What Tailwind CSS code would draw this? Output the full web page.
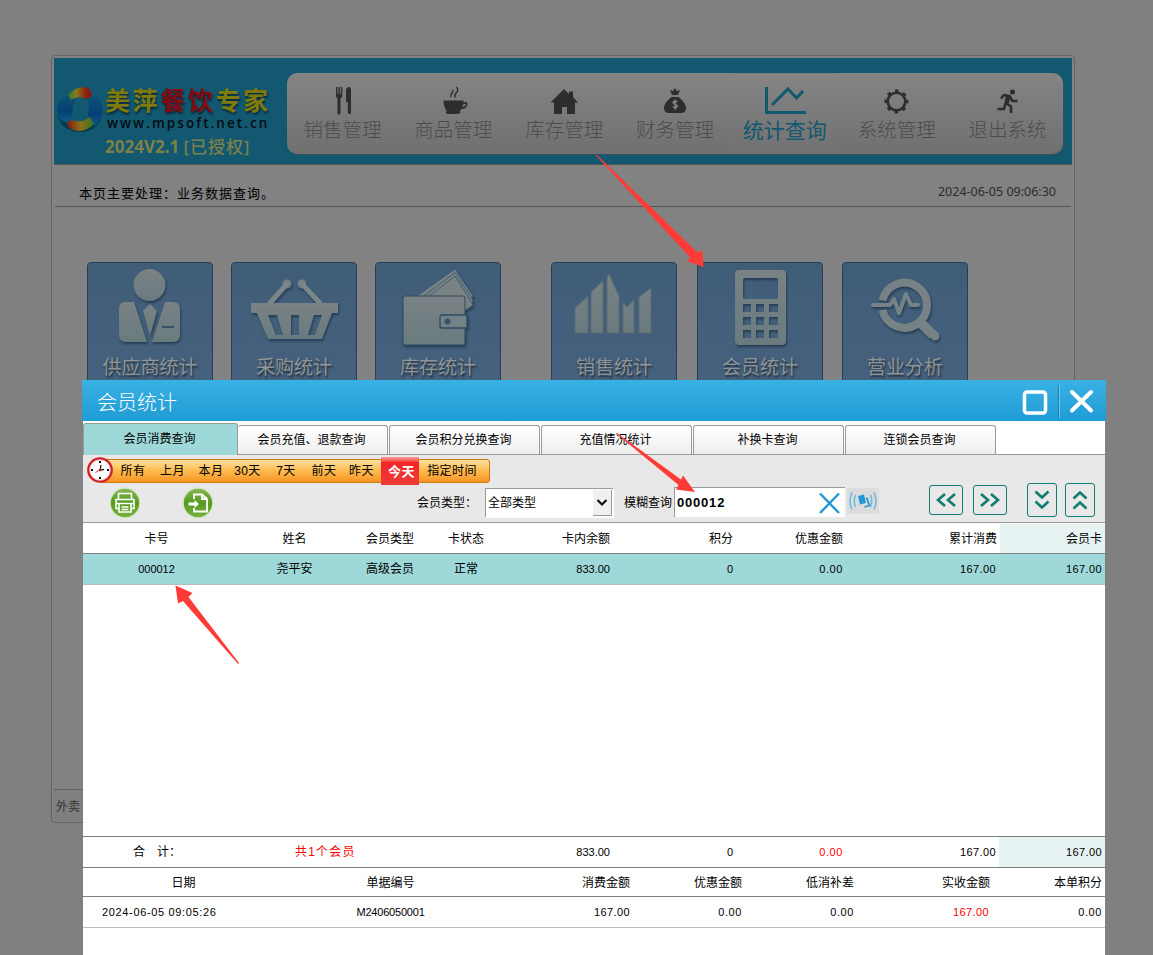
<!DOCTYPE html>
<html lang="zh-CN">
<head>
  <meta charset="UTF-8" />
  <meta name="viewport" content="width=device-width, initial-scale=1.0" />
  <title>会员统计</title>
  <script src="https://cdn.jsdelivr.net/npm/@tailwindcss/browser@4"></script>
  <style>
    body { font-family: 'Liberation Sans', 'Noto Sans CJK SC', sans-serif; }
    .tile-icon { filter: drop-shadow(1px 2px 1px rgba(20, 40, 60, .6)); }
    .tile-text { text-shadow: 1px 2px 2px #1d2f3f; }
  </style>
</head>
<body class="bg-[#808080] text-black">
<div class="relative w-[1153px] h-[955px] overflow-hidden">

  <!-- main window, dimmed -->
  <div class="absolute left-[51px] top-[55px] w-[1024px] h-[768px] border border-[#656565] rounded-[4px] bg-[#828282] px-[2px] pt-[2px] flex flex-col">
    <header class="h-[107px] shrink-0 bg-[#115870] border-b border-[#555] flex">
      <div class="w-[233px] shrink-0 relative flex pt-[27px]">
        <svg class="ml-[3px] w-[46px] h-[48px] shrink-0" viewBox="0 0 46 48">
          <defs>
            <linearGradient id="lgWarm" x1="0" x2="1"><stop offset="0" stop-color="#2f7a3a"/><stop offset=".35" stop-color="#8a7a18"/><stop offset=".75" stop-color="#8a2010"/><stop offset="1" stop-color="#7d1d10"/></linearGradient>
            <linearGradient id="lgWarm2" x1="0" x2="1"><stop offset="0" stop-color="#851a10"/><stop offset=".5" stop-color="#8a7218"/><stop offset="1" stop-color="#2f7428"/></linearGradient>
            <linearGradient id="lgBlue" x1="0" y1="0" x2="0" y2="1"><stop offset="0" stop-color="#0a5577"/><stop offset=".6" stop-color="#063f74"/><stop offset="1" stop-color="#0a5a88"/></linearGradient>
          </defs>
          <path d="M1 27Q1 47 26 47Q45 45 45 24Q44 38 28 42Q8 44 1 27Z" fill="#0b3a4c"/>
          <path d="M13 9Q0 15 0 24Q1 34 6 36Q14 36 16 28Q14 20 20 12.500Z" fill="url(#lgBlue)"/>
          <path d="M29 13Q33 11 39 10.500Q46 15 45.500 26Q44 36 38 41Q31 37 31 30Q34 20 29 13Z" fill="url(#lgBlue)"/>
          <path d="M11 10Q18 2 27 2Q34 3 35 9Q34 13 30 14Q20 10 14 15Z" fill="url(#lgWarm)"/>
          <path d="M37 39Q30 46 22 46Q12 45 10.500 39Q11 35 16 35.500Q26 38 33 32Z" fill="url(#lgWarm2)"/>
        </svg>
        <div class="whitespace-nowrap">
          <div class="h-[29px] leading-[32px] ml-[2px] text-[25px] font-bold tracking-[2.6px] text-[#807a0c] [text-shadow:1px_2px_2px_#062a3a]">美萍<span class="text-[#820b12]">餐饮</span>专家</div>
          <div class="h-[16px] leading-[18px] ml-[4px] text-[13.5px] tracking-[2.05px] font-[Open_Sans] font-semibold text-[#050d10]">www.mpsoft.net.cn</div>
          <div class="h-[26px] leading-[34px] ml-[2px] text-[17px] font-bold text-[#7f8048] font-[Noto_Sans,Noto_Sans_CJK_SC]">2024V2.1 <span class="font-medium tracking-[.9px]">[已授权]</span></div>
        </div>
      </div>
      <nav class="w-[776px] h-[81px] mt-[15px] rounded-[10px] bg-gradient-to-b from-[#848484] to-[#707070] grid grid-cols-7 text-center text-[19.5px] text-[#4c4c4c] font-light font-[Noto_Sans_CJK_SC] shadow-[1px_1px_2px_#31535f]">
        <div>
          <svg class="mx-auto mt-[13px] w-[30px] h-[30px]" viewBox="0 0 30 30" fill="#2d2d2d"><path d="M9 1h1.400v7h1V1h1.500v7h1V1h1.400v8.500q0 2-1.800 3V27a1.400 1.400 0 0 1-3 0V12.500Q9 11.500 9 9.500ZM24 3v23.500a1.600 1.600 0 0 1-3.200 0V16H19V5q0-4 3-4 2 0 2 2Z"/></svg>
          <div class="leading-[26px]">销售管理</div>
        </div>
        <div>
          <svg class="mx-auto mt-[13px] w-[30px] h-[30px]" viewBox="0 0 30 30" fill="#2d2d2d"><path d="M5.500 14.500h20v2q4-1.500 4 1.500c0 3-3 5-6 5q-1 1.500-2.500 2.500h1.500q0 2.500-4 2.500H11q-3.500 0-3.500-2.500h2Q5.500 22 5.500 14.500Zm19.500 4L24.500 21q3-1 3.300-2.500.2-1.500-2.800 0Z"/><path d="M13 11.500q-1-2 1-4.500t.5-3M17 11.500q-1-2.500 1.500-5T18.500 1" fill="none" stroke="#2d2d2d" stroke-width="1.400"/></svg>
          <div class="leading-[26px]">商品管理</div>
        </div>
        <div>
          <svg class="mx-auto mt-[13px] w-[30px] h-[30px]" viewBox="0 0 30 30" fill="#2d2d2d"><path d="M15 3l5 5V5.500h4V11l5 5.500h-3V28h-8v-7h-5v7H5V16.500H1.500Z"/></svg>
          <div class="leading-[26px]">库存管理</div>
        </div>
        <div>
          <svg class="mx-auto mt-[13px] w-[30px] h-[30px]" viewBox="0 0 30 30"><path d="M10 4l3 1 2-3 2 3 3-1-2 5h-6ZM11.500 11h7c4 3 7.500 7 7.500 11 0 3-2 5-5 5H9c-3 0-5-2-5-5 0-4 3.500-8 7.500-11Z" fill="#2d2d2d"/><path d="M17.500 16q-2.500-1.500-4.300 0c-1 2.500 4.300 2 4.300 4.500q-2 2-4.700.3M15.200 13.500V24" fill="none" stroke="#888" stroke-width="1.300"/></svg>
          <div class="leading-[26px]">财务管理</div>
        </div>
        <div class="bg-gradient-to-b from-[#858585] to-[#717171] rounded-t-[6px] mr-[2px] border-t border-[#7a7a7a] text-[#115870] text-[21px] font-normal">
          <svg class="mx-auto mt-[12px] w-[42px] h-[30px]" viewBox="0 0 42 30" fill="none" stroke="#115870" stroke-width="3"><path d="M2.500 1v25.500H43"/><path d="M8 19L24 3l8.500 9L39 5"/></svg>
          <div class="leading-[26px]">统计查询</div>
        </div>
        <div>
          <svg class="mx-auto mt-[13px] w-[30px] h-[30px]" viewBox="0 0 30 30" fill="none" stroke="#2d2d2d"><circle cx="14.500" cy="15.500" r="8.800" stroke-width="2.600"/><circle cx="14.500" cy="15.500" r="10.700" stroke-width="2.600" stroke-dasharray="3.600 4.803" stroke-dashoffset="1.800"/></svg>
          <div class="leading-[26px]">系统管理</div>
        </div>
        <div>
          <svg class="mx-auto mt-[13px] w-[30px] h-[30px]" viewBox="0 0 30 30"><circle cx="19.500" cy="6" r="2.500" fill="#2d2d2d"/><path d="M8 12.500l3-3.500 5.500 1-3.500 7 5 3.500V27M12.500 17.500L11 23H4.500M16.500 10l3 5h5" fill="none" stroke="#2d2d2d" stroke-width="2.600" stroke-linejoin="round"/><path d="M12.500 10.500l5-1.500-1.500 8-4.500 1Z" fill="#2d2d2d"/></svg>
          <div class="leading-[26px]">退出系统</div>
        </div>
      </nav>
    </header>

    <div class="h-[42px] shrink-0 mx-px border-b border-[#555] flex justify-between">
      <div class="pl-[24px] pt-[19px] text-[13px] leading-[20px] tracking-[1px]">本页主要处理：业务数据查询。</div>
      <div class="pr-[15px] pt-[17px] text-[12.5px] leading-[20px] text-[#2c2c2c] font-[Noto_Sans]">2024-06-05 09:06:30</div>
    </div>

    <div class="flex pl-[33px] pt-[55px] h-[582px] shrink-0 items-start text-[#909494] text-[19px] text-center font-[Noto_Sans_CJK_SC]">
      <svg width="0" height="0" class="absolute"><defs><linearGradient id="ic" x1="0" y1="0" x2="0" y2="1"><stop offset="0" stop-color="#7a8284"/><stop offset="1" stop-color="#697b7f"/></linearGradient></defs></svg>
      <div class="w-[126px] h-[126px] mr-[18px] border border-[#253f58] rounded-[4px] bg-gradient-to-b from-[#405d78] to-[#46617d]">
        <svg class="tile-icon w-[124px] h-[90px]" viewBox="0 0 124 90" fill="url(#ic)"><circle cx="61.500" cy="22" r="16"/><path d="M38 39h8l13 40H38q-7 0-7-7V46q0-7 7-7ZM77 39h7q8 0 8 7v26q0 7-7 7H64Z"/><path d="M62 41l7 7-7 25-7-25Z"/><path d="M74 64h12" stroke="#36536b" stroke-width="2"/></svg>
        <div class="tile-text leading-[26px]">供应商统计</div>
      </div>
      <div class="w-[126px] h-[126px] mr-[18px] border border-[#253f58] rounded-[4px] bg-gradient-to-b from-[#405d78] to-[#46617d]">
        <svg class="tile-icon w-[124px] h-[90px]" viewBox="0 0 124 90" fill="url(#ic)"><circle cx="55" cy="21" r="4.500"/><circle cx="70" cy="21" r="4.500"/><path d="M55 21L38 40M70 21L88 40" stroke="#79878b" stroke-width="5" stroke-linecap="round"/><path fill-rule="evenodd" d="M19 40h87v10h-6L90 76H36L25 50h-6ZM36 52l8 20h7l-6-20ZM59 52v20h8V52ZM82 52l-6 20h7l7-20Z"/></svg>
        <div class="tile-text leading-[26px]">采购统计</div>
      </div>
      <div class="w-[126px] h-[126px] mr-[50px] border border-[#253f58] rounded-[4px] bg-gradient-to-b from-[#405d78] to-[#46617d]">
        <svg class="tile-icon w-[124px] h-[90px]" viewBox="0 0 124 90"><g fill="#7a8284" stroke="#405d78" stroke-width="1"><path d="M41 33L79 6l18 27-7 9H60Z"/><path d="M45 35L79 9.500l18 28-4 8H60Z"/><path d="M49 36L79 13l18 29-7 5H60Z"/></g><rect x="27" y="33" width="62" height="49" rx="2" fill="url(#ic)" stroke="#2f4b63"/><path d="M91 52H66q-2 0-2 2v9q0 2 2 2h25Z" fill="#748286" stroke="#2f4b63" stroke-width="1.300"/><circle cx="71.500" cy="58.500" r="3" fill="#36536b"/></svg>
        <div class="tile-text leading-[26px]">库存统计</div>
      </div>
      <div class="w-[126px] h-[126px] mr-[20px] border border-[#253f58] rounded-[4px] bg-gradient-to-b from-[#405d78] to-[#46617d]">
        <svg class="w-[124px] h-[90px]" viewBox="0 0 124 90" fill="url(#ic)" stroke="#5c6c74" stroke-width="1"><path d="M23 70V45l13-12v37ZM39 70V29l12-11v52ZM55 70V15l2-4 10 22v37ZM71 70V40l4 4 7-7v33ZM87 70V34l12-9v45Z"/></svg>
        <div class="tile-text leading-[26px]">销售统计</div>
      </div>
      <div class="w-[126px] h-[126px] mr-[19px] border border-[#253f58] rounded-[4px] bg-gradient-to-b from-[#405d78] to-[#46617d]">
        <svg class="tile-icon w-[124px] h-[90px]" viewBox="0 0 124 90" fill="url(#ic)"><path fill-rule="evenodd" d="M41 7h43q4 0 4 4v67q0 4-4 4H41q-4 0-4-4V11q0-4 4-4ZM47 15q-2 0-2 2v17q0 2 2 2h31q2 0 2-2V17q0-2-2-2ZM45 41v8h8v-8ZM58 41v8h8v-8ZM71 41v8h9v-8ZM45 54v8h8v-8ZM58 54v8h8v-8ZM71 54v8h9v-8ZM45 67v8h8v-8ZM58 67v8h8v-8ZM71 67v8h9v-8Z"/></svg>
        <div class="tile-text leading-[26px]">会员统计</div>
      </div>
      <div class="w-[126px] h-[126px] border border-[#253f58] rounded-[4px] bg-gradient-to-b from-[#405d78] to-[#46617d]">
        <svg class="tile-icon w-[124px] h-[90px]" viewBox="0 0 124 90" fill="none" stroke="#768285"><path d="M39.500 37.500A22.500 22.500 0 1 1 39.500 47" stroke-width="8"/><path d="M77 59L90 72" stroke-width="10"/><path d="M91 72l1 1" stroke-width="9" stroke-linecap="round"/><path d="M30 42h17l4-6 5 14 7-19 5 11h7" stroke-width="4" stroke-linecap="round" stroke-linejoin="round"/></svg>
        <div class="tile-text leading-[26px]">营业分析</div>
      </div>
    </div>
    <div class="flex-1 border-t border-[#656565] pl-[2px] pt-[7px] text-[12px] leading-[20px] text-[#333] bg-[#7f7f7f]">外卖</div>
  </div>

  <!-- member statistics dialog -->
  <div class="absolute left-[82px] top-[380px] w-[1024px] h-[575px] flex flex-col text-[12px]">
    <div class="h-[41px] shrink-0 bg-gradient-to-b from-[#38b1e4] to-[#1e9cd5] flex items-center text-white">
      <div class="flex-1 pl-[15px] pt-[2px] text-[20px] font-light font-[Noto_Sans_CJK_SC]">会员统计</div>
      <svg class="w-[84px] h-[41px]" viewBox="0 0 84 41" fill="none"><rect x="2.500" y="12" width="21" height="21" rx="2.500" stroke="#fff" stroke-width="3.500"/><path d="M36.500 5v33" stroke="#1680b6"/><path d="M37.500 5v33" stroke="#72c9ee"/><path d="M50 12l19 18.500M69 12l-19 18.500" stroke="#fff" stroke-width="4" stroke-linecap="round"/></svg>
    </div>

    <div class="mx-px flex-1 min-h-0 bg-white flex flex-col">
      <div class="h-[34px] shrink-0 border-b border-[#999] flex items-end">
        <div class="w-[155px] h-[32px] mb-[-1px] bg-[#9ed8d8] border-t border-x border-[#999] rounded-t-[3px] text-center leading-[30px] pr-[2px]">会员消费查询</div>
        <div class="w-[150px] h-[29px] border-t border-r border-[#999] rounded-t-[3px] bg-gradient-to-b from-white to-[#eee] text-center leading-[28px] pr-[2px]">会员充值、退款查询</div>
        <div class="w-[151px] h-[29px] ml-px border-t border-x border-[#999] rounded-t-[3px] bg-gradient-to-b from-white to-[#eee] text-center leading-[28px] pr-[2px]">会员积分兑换查询</div>
        <div class="w-[151px] h-[29px] ml-px border-t border-x border-[#999] rounded-t-[3px] bg-gradient-to-b from-white to-[#eee] text-center leading-[28px] pr-[2px]">充值情况统计</div>
        <div class="w-[151px] h-[29px] ml-px border-t border-x border-[#999] rounded-t-[3px] bg-gradient-to-b from-white to-[#eee] text-center leading-[28px] pr-[2px]">补换卡查询</div>
        <div class="w-[151px] h-[29px] ml-px border-t border-x border-[#999] rounded-t-[3px] bg-gradient-to-b from-white to-[#eee] text-center leading-[28px] pr-[2px]">连锁会员查询</div>
      </div>

      <div class="h-[68px] shrink-0 bg-[#e8e8e8] border-b border-[#999]">
        <div class="flex items-center h-[31px] pl-[4px]">
          <svg class="w-[27px] h-[27px] relative z-10" viewBox="0 0 27 27"><circle cx="13" cy="13" r="11.700" fill="#fff" stroke="#cf2027" stroke-width="2.300"/><circle cx="13" cy="13" r="10.300" fill="none" stroke="#e9a5a5" stroke-width=".7"/><path d="M12 4h2v2h-2ZM12 20h2v2h-2ZM4 12h2v2H4ZM20 12h2v2h-2Z" fill="#111"/><path d="M14 8l-.8 5.500M13 13.300l4-1" stroke="#111" stroke-width="1.200"/><path d="M8.500 15.500l5-3" stroke="#d33"/><circle cx="13" cy="13" r="1.300" fill="#a22"/></svg>
          <div class="-ml-[14px] pl-[13px] h-[24px] w-[390px] flex items-center text-center leading-[24px] tracking-[.4px] rounded-[3px] border border-[#cf7a0e] bg-gradient-to-b from-[#fee1a0] via-[#fcbd52] via-45% to-[#f7941f] whitespace-nowrap">
            <span class="w-[38px]">所有</span>
            <span class="w-[41px]">上月</span>
            <span class="w-[36px]">本月</span>
            <span class="w-[37px]">30天</span>
            <span class="w-[40px]">7天</span>
            <span class="w-[36px]">前天</span>
            <span class="w-[39px]">昨天</span>
            <span class="w-[38px] h-[28px] shrink-0 leading-[29px] pl-[3px] bg-gradient-to-b from-[#f99] via-[#f2242a] via-20% to-[#ee3b35] text-white font-bold text-[13px]">今天</span>
            <span class="w-[66px]">指定时间</span>
          </div>
        </div>

        <div class="flex items-start h-[36px] leading-[30px]">
          <svg class="w-[32px] h-[32px] ml-[26px] mt-px shrink-0" viewBox="0 0 32 32"><defs><linearGradient id="gb" x1="0" y1="0" x2="0" y2="1"><stop offset="0" stop-color="#86b850"/><stop offset=".5" stop-color="#579a22"/><stop offset="1" stop-color="#79b23c"/></linearGradient></defs><circle cx="16" cy="16" r="14.800" fill="url(#gb)" stroke="#d3e6c4" stroke-width="1.200"/><g fill="none" stroke="#fff" stroke-width="1.600"><path d="M9.500 12V6.500h13V12M9.500 21.500H7v-9h18v9h-2.500M7 16.500h18M10 17v8h12v-8M12.500 20h7M12.500 22.500h7"/></g></svg>
          <svg class="w-[32px] h-[32px] ml-[41px] mt-px shrink-0" viewBox="0 0 32 32"><circle cx="16" cy="16" r="14.800" fill="url(#gb)" stroke="#d3e6c4" stroke-width="1.200"/><path d="M12 12V7.500h8l5 4.500v12.500H12V21M20 7.500V12h5" fill="none" stroke="#fff" stroke-width="1.800"/><path d="M6.500 15.500h6V13l4.500 4-4.500 4v-2.500h-6Z" fill="#fff"/></svg>
          <div class="ml-[203px] w-[68px] mt-[2px] whitespace-nowrap">会员类型：</div>
          <div class="w-[128px] h-[29px] mt-[2px] bg-white border-t border-l border-[#999] flex justify-between shadow-[1px_1px_0_#fff] leading-[29px]">
            <span class="pl-[2px]">全部类型</span>
            <span class="w-[19px] h-[26px] mt-px mr-px bg-[#f0f0f0] border-r border-b border-[#999] flex items-center justify-center"><svg class="w-[12px] h-[9px]" viewBox="0 0 12 9"><path d="M1.500 2L6 6.500 10.500 2" fill="none" stroke="#111" stroke-width="2.200"/></svg></span>
          </div>
          <div class="ml-[11px] mt-[2px] w-[50px] whitespace-nowrap">模糊查询</div>
          <div class="w-[171px] h-[30px] mt-px bg-white border-t border-l border-[#999] flex items-center justify-between">
            <span class="pl-[2px] text-[13px] font-bold tracking-[.8px]">000012</span>
            <svg class="w-[23px] h-[22px] mr-[4px]" viewBox="0 0 23 22"><path d="M2 1.500l19 19.500M21 1.500L2 21" stroke="#2299d4" stroke-width="2.400"/></svg>
          </div>
          <svg class="w-[32px] h-[26px] ml-[2px] mt-[2px] shrink-0 bg-[#dcdcdc]" viewBox="0 0 32 26"><path d="M5 4.500q-4 8.500 0 17M8.500 7q-2.500 6 0 12M27 4.500q4 8.500 0 17M23.500 7q2.500 6 0 12" fill="none" stroke="#67b9de" stroke-width="1.500"/><path d="M11 8l6-1.500 2 8.500-6 1.500Z" fill="#2299d4"/><path d="M19.500 9.500l3 8-5 1.500" fill="none" stroke="#2299d4" stroke-width="1.800"/></svg>
          <div class="w-[34px] h-[30px] -mt-px ml-[50px] border border-[#117c70] rounded-[3px] flex items-center justify-center"><svg class="w-[22px] h-[18px]" viewBox="0 0 22 18" fill="none" stroke="#117c70" stroke-width="2.600"><path d="M10 3L3 9l7 6M20 3l-7 6 7 6"/></svg></div>
          <div class="w-[34px] h-[30px] -mt-px ml-[10px] border border-[#117c70] rounded-[3px] flex items-center justify-center"><svg class="w-[22px] h-[18px]" viewBox="0 0 22 18" fill="none" stroke="#117c70" stroke-width="2.600"><path d="M2 3l7 6-7 6M12 3l7 6-7 6"/></svg></div>
          <div class="w-[30px] h-[34px] -mt-[3px] ml-[20px] border border-[#117c70] rounded-[3px] flex items-center justify-center"><svg class="w-[18px] h-[22px]" viewBox="0 0 18 22" fill="none" stroke="#117c70" stroke-width="2.600"><path d="M2.500 2.500L9 8.500l6.500-6M2.500 12.500L9 18.500l6.500-6"/></svg></div>
          <div class="w-[30px] h-[34px] -mt-[3px] ml-[8px] border border-[#117c70] rounded-[3px] flex items-center justify-center"><svg class="w-[18px] h-[22px]" viewBox="0 0 18 22" fill="none" stroke="#117c70" stroke-width="2.600"><path d="M2.500 9.500L9 3.500l6.500 6M2.500 19.500L9 13.500l6.500 6"/></svg></div>
        </div>
      </div>

      <!-- member list -->
      <div class="h-[31px] shrink-0 border-b border-[#808080] leading-[32px] grid grid-cols-[147px_129px_62px_90px_99px_123px_110px_154px_108px] text-right whitespace-nowrap">
        <div class="text-center">卡号</div>
        <div class="text-center">姓名</div>
        <div class="text-center">会员类型</div>
        <div class="text-center">卡状态</div>
        <div>卡内余额</div>
        <div>积分</div>
        <div>优惠金额</div>
        <div>累计消费</div>
        <div class="ml-[3px] mt-px pr-[3px] h-[29px] leading-[30px] bg-[#e7f3f3]">会员卡</div>
      </div>
      <div class="h-[31px] shrink-0 border-b border-[#bbb] bg-[#9ed8d8] leading-[31px] grid grid-cols-[147px_129px_62px_90px_99px_123px_110px_154px_108px] text-right whitespace-nowrap">
        <div class="text-center text-[11px]">000012</div>
        <div class="text-center">尧平安</div>
        <div class="text-center">高级会员</div>
        <div class="text-center">正常</div>
        <div class="text-[11px]">833.00</div>
        <div class="text-[11px]">0</div>
        <div class="text-[11px] tracking-[.6px]">0.00</div>
        <div class="text-[11px] pr-px tracking-[.4px]">167.00</div>
        <div class="text-[11px] pr-[3px] tracking-[.4px]">167.00</div>
      </div>
      <div class="flex-1"></div>
      <div class="h-[32px] shrink-0 border-y border-[#808080] leading-[31px] grid grid-cols-[147px_129px_62px_90px_99px_123px_110px_154px_108px] text-right whitespace-nowrap">
        <div class="text-left pl-[50px]">合&emsp;计：</div>
        <div class="text-left pl-[65px] tracking-[1.200px] text-[#f00]">共1个会员</div>
        <div></div>
        <div></div>
        <div class="text-[11px]">833.00</div>
        <div class="text-[11px]">0</div>
        <div class="text-[11px] tracking-[.6px] text-[#f00]">0.00</div>
        <div class="text-[11px] pr-px tracking-[.4px]">167.00</div>
        <div class="text-[11px] ml-[2px] h-[30px] pr-[3px] tracking-[.4px] bg-[#e7f3f3]">167.00</div>
      </div>

      <!-- consumption records -->
      <div class="h-[29px] shrink-0 border-b border-[#808080] leading-[30px] grid grid-cols-[201px_213px_133px_112px_112px_136px_115px] text-right whitespace-nowrap">
        <div class="text-center">日期</div>
        <div class="text-center">单据编号</div>
        <div>消费金额</div>
        <div>优惠金额</div>
        <div>低消补差</div>
        <div>实收金额</div>
        <div class="pr-[3px]">本单积分</div>
      </div>
      <div class="h-[31px] shrink-0 border-b border-[#bbb] leading-[30px] grid grid-cols-[201px_213px_133px_112px_112px_135px_116px] text-[11px] tracking-[.4px] text-right whitespace-nowrap">
        <div class="text-left pl-[19px] tracking-[.65px]">2024-06-05 09:05:26</div>
        <div class="text-center tracking-[-.2px]">M2406050001</div>
        <div>167.00</div>
        <div class="tracking-[.6px]">0.00</div>
        <div class="tracking-[.6px]">0.00</div>
        <div class="text-[#f00]">167.00</div>
        <div class="pr-[3px] tracking-[.6px]">0.00</div>
      </div>
      <div class="h-[27px] shrink-0"></div>
    </div>
  </div>

  <!-- pointer arrows -->
  <svg class="absolute left-0 top-0 w-[1153px] h-[955px] pointer-events-none" viewBox="0 0 1153 955" fill="#ff3b38">
    <path d="M595.500 155L597 155 697.500 252.500l5-2L703.500 267 687 261l3-3.500Z"/>
    <path d="M615.500 433L617 433 681 479.500l2-4L695 492l-19-2.500 2.500-4.500Z"/>
    <path d="M175.500 585.500L192.500 593l-4 4L239 663 238 664 183 601l-5 2.500Z"/>
  </svg>
</div>
</body>
</html>
